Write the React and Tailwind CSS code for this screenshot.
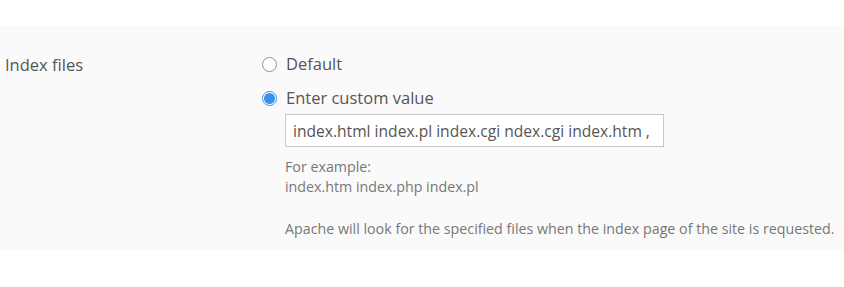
import React, { useState } from 'react';

function Radio({ checked }) {
  return checked ? (
    <span className="w-[15px] h-[15px] rounded-full border border-[#3d8fe8] bg-white flex items-center justify-center shrink-0">
      <span className="w-[11px] h-[11px] rounded-full bg-[#3d8fe8]" />
    </span>
  ) : (
    <span className="w-[15px] h-[15px] rounded-full border-[1.5px] border-[#8f8f8f] bg-white shrink-0" />
  );
}

export default function App() {
  const [mode, setMode] = useState('custom');
  const [value, setValue] = useState('index.html index.pl index.cgi ndex.cgi index.htm ,');

  return (
    <div className="w-[844px] h-[287px] bg-white font-['Open_Sans',sans-serif] text-[#555]">
      <div className="h-[26px] bg-white" />
      <div className="bg-[#fafafa] h-[224px] flex pt-[27px]">
        <div className="w-[262px] pl-[5px] text-[16.5px] leading-[24px]">Index files</div>

        <div className="flex flex-col">
          <label className="flex items-center gap-[9px] h-[22px] cursor-pointer" onClick={() => setMode('default')}>
            <Radio checked={mode === 'default'} />
            <span className="text-[16.5px]">Default</span>
          </label>
          <label className="flex items-center gap-[9px] h-[22px] mt-[12px] cursor-pointer" onClick={() => setMode('custom')}>
            <Radio checked={mode === 'custom'} />
            <span className="text-[16.5px]">Enter custom value</span>
          </label>

          <div className="pl-[23px] mt-[5px]">
            <input
              value={value}
              onChange={e => setValue(e.target.value)}
              className="w-[379px] h-[33px] border border-[#c8c8c8] bg-white pl-[7px] pr-[4px] text-[15.6px] text-[#555] outline-none"
            />
            <div className="mt-[10px] text-[14.25px] leading-[20px] text-[#777]">
              <div>For example:</div>
              <div>index.htm index.php index.pl</div>
              <div className="mt-[22px]">Apache will look for the specified files when the index page of the site is requested.</div>
            </div>
          </div>
        </div>
      </div>
    </div>
  );
}
